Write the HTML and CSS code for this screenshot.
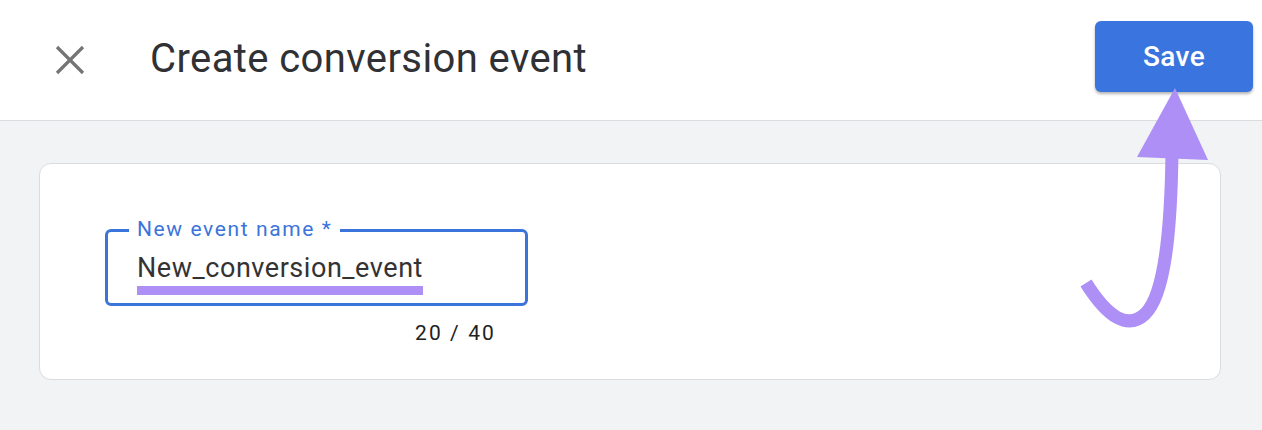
FILE: index.html
```html
<!DOCTYPE html>
<html>
<head>
<meta charset="utf-8">
<link rel="stylesheet" href="styles.css">
</head>
<body>
<div class="header">
  <button class="close" aria-label="Close">
    <svg width="32" height="32" viewBox="0 0 32 32"><path d="M3 3 L29 29 M29 3 L3 29" stroke="#757575" stroke-width="3.2" fill="none"/></svg>
  </button>
  <h1 class="title">Create conversion event</h1>
  <button class="save">Save</button>
</div>
<div class="main">
  <div class="card">
    <div class="field">
      <div class="outline">
        <span class="label">New event name *</span>
        <span class="value">New_conversion_event</span>
      </div>
      <div class="counter">20 / 40</div>
    </div>
  </div>
</div>
<svg class="arrow" width="1262" height="430" viewBox="0 0 1262 430">
  <path d="M1172 152 C1171 230 1165 295 1145 314 C1128 330 1108 318 1086 283" stroke="#ad8ff5" stroke-width="13" fill="none"/>
  <polygon points="1175,88 1137,157 1208,160" fill="#ad8ff5"/>
</svg>
</body>
</html>
```
FILE: styles.css
```css
html, body {
  margin: 0;
  padding: 0;
}
body {
  width: 1262px;
  height: 430px;
  background: #f1f3f4;
  font-family: Roboto, "Liberation Sans", sans-serif;
  position: relative;
  overflow: hidden;
}
.header {
  height: 120px;
  background: #fff;
  border-bottom: 1px solid #dadce0;
  display: flex;
  align-items: center;
  padding-left: 54px;
  padding-right: 9px;
}
.close {
  background: none;
  border: 0;
  padding: 0;
  width: 32px;
  height: 32px;
  display: flex;
  margin-top: -1px;
}
.title {
  margin: 0 0 0 64px;
  font-weight: 400;
  font-size: 40px;
  color: #303134;
  flex: 1;
  margin-top: -4px;
  letter-spacing: 0.4px;
}
.save {
  width: 158px;
  height: 71px;
  background: #3a74de;
  color: #fff;
  border: 0;
  border-radius: 6px;
  font-family: Roboto, "Liberation Sans", sans-serif;
  font-size: 28px;
  font-weight: 500;
  letter-spacing: 0.4px;
  box-shadow: 0 2px 3px rgba(0,0,0,0.3);
  margin-top: -7px;
}
.main {
  padding: 42px 41px 0 39px;
}
.card {
  background: #fff;
  border: 1px solid #dadce0;
  border-radius: 12px;
  padding: 65px 0 0 65px;
  box-sizing: border-box;
  height: 217px;
}
.field {
  width: 423px;
}
.outline {
  height: 77px;
  border: 3px solid #3b74da;
  border-radius: 6px;
  box-sizing: border-box;
  position: relative;
  padding: 20px 0 0 29px;
}
.label {
  position: absolute;
  top: -15px;
  left: 21px;
  padding: 0 8px;
  background: #fff;
  color: #3b74da;
  font-size: 21px;
  line-height: 24px;
  letter-spacing: 1.6px;
}
.value {
  display: inline-block;
  font-size: 27px;
  line-height: 32px;
  color: #333;
  letter-spacing: 0.55px;
  border-bottom: 9px solid #ad8ff5;
  padding-bottom: 2px;
}
.counter {
  text-align: right;
  padding-right: 32px;
  margin-top: 15px;
  font-size: 21px;
  line-height: 24px;
  color: #222;
  letter-spacing: 2.1px;
}
.arrow {
  position: absolute;
  left: 0;
  top: 0;
  pointer-events: none;
}
```
